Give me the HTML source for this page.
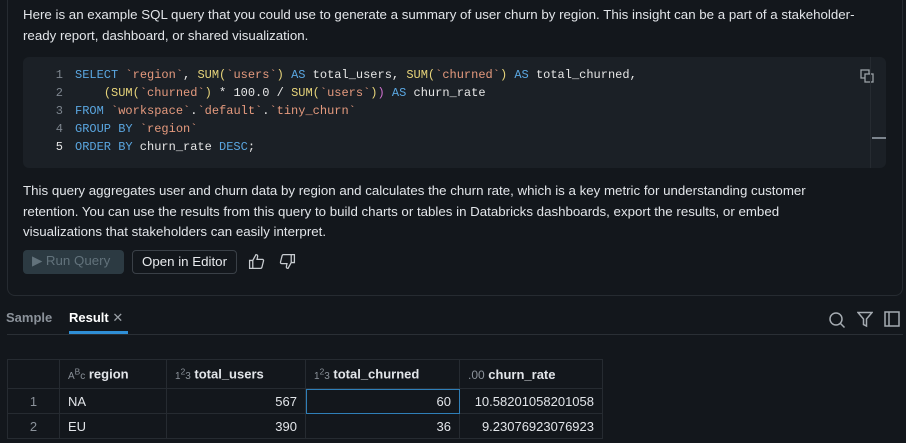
<!DOCTYPE html>
<html><head><style>
*{margin:0;padding:0;box-sizing:border-box}
body{width:906px;height:443px;background:#13171c;font-family:"Liberation Sans",sans-serif;color:#e2e5e9;overflow:hidden;position:relative}
.panel{position:absolute;left:7px;top:-10px;width:896px;height:306px;border:1px solid #262b31;border-top:none;border-radius:0 0 8px 8px}
.p{position:absolute;left:23px;font-size:13.3px;line-height:20.5px;width:850px}
.code{position:absolute;left:23px;top:57px;width:863px;height:111px;background:#1b2026;border-radius:6px;font-family:"Liberation Mono",monospace;font-size:12px;line-height:18.2px;padding-top:9px}
.ln{position:absolute;left:30px;color:#7d858e;width:10px;text-align:right}
.l{position:absolute;left:52px;white-space:pre;color:#e6e6e6}
.k{color:#5aa6e0}.s{color:#e59a7e}.f{color:#e6d37a}.pu{color:#d070d0}
.btn{position:absolute;top:250px;height:24px;border-radius:4px;font-size:13.3px;line-height:22px;padding:0 9px}
.tab{position:absolute;top:310px;font-size:13px;font-weight:bold}
table{position:absolute;left:7px;top:359px;border-collapse:collapse;font-size:13px;table-layout:fixed;width:595px}
td{border:1px solid #262b31;height:25px;padding:0 8px;color:#e2e5e9}
th{border:1px solid #262b31;height:29px;padding:0 8px;text-align:left;font-weight:bold;color:#e2e5e9}
.ic{color:#8b929a;font-weight:normal;font-size:10px}
</style></head><body>
<div class="panel"></div>
<div class="p" style="top:5px">Here is an example SQL query that you could use to generate a summary of user churn by region. This insight can be a part of a stakeholder-ready report, dashboard, or shared visualization.</div>
<div class="code">
<div class="ln" style="top:9px">1</div><div class="l" style="top:9px"><span class="k">SELECT</span> <span class="s">`region`</span>, <span class="f">SUM(</span><span class="s">`users`</span><span class="f">)</span> <span class="k">AS</span> total_users, <span class="f">SUM(</span><span class="s">`churned`</span><span class="f">)</span> <span class="k">AS</span> total_churned,</div>
<div class="ln" style="top:27px">2</div><div class="l" style="top:27px">    <span class="f">(SUM(</span><span class="s">`churned`</span><span class="f">)</span> * 100.0 / <span class="f">SUM(</span><span class="s">`users`</span><span class="f">)</span><span class="pu">)</span> <span class="k">AS</span> churn_rate</div>
<div class="ln" style="top:45px">3</div><div class="l" style="top:45px"><span class="k">FROM</span> <span class="s">`workspace`</span>.<span class="s">`default`</span>.<span class="s">`tiny_churn`</span></div>
<div class="ln" style="top:63px">4</div><div class="l" style="top:63px"><span class="k">GROUP BY</span> <span class="s">`region`</span></div>
<div class="ln" style="top:81px;color:#e6e6e6">5</div><div class="l" style="top:81px"><span class="k">ORDER BY</span> churn_rate <span class="k">DESC</span>;</div>
<svg style="position:absolute;left:837px;top:12px" width="14" height="14" viewBox="0 0 14 14" fill="none" stroke="#9aa0a6" stroke-width="1.3"><rect x="1" y="1" width="8" height="8"/><rect x="5" y="5" width="8" height="8" fill="#1b2026"/></svg>
<div style="position:absolute;left:847px;top:0;width:1px;height:111px;background:#262b31"></div>
<div style="position:absolute;left:849px;top:80px;width:14px;height:2px;background:#7d858e"></div>
</div>
<div class="p" style="top:181px;width:830px">This query aggregates user and churn data by region and calculates the churn rate, which is a key metric for understanding customer retention. You can use the results from this query to build charts or tables in Databricks dashboards, export the results, or embed visualizations that stakeholders can easily interpret.</div>
<div class="btn" style="left:23px;width:101px;background:#2c3a42;color:#62727b">&#9654; Run Query</div>
<div class="btn" style="left:132px;border:1px solid #3a4047;color:#e8eaed">Open in Editor</div>
<svg style="position:absolute;left:248px;top:253px" width="17" height="17" viewBox="0 0 16 16" fill="none" stroke="#c8ccd0" stroke-width="1.2"><path d="M1.5 7h3v7.5h-3zM4.5 7l3-5.5c1.2 0 1.8.8 1.5 2L8.5 6h5c.8 0 1.3.7 1.1 1.4l-1.5 6c-.2.7-.7 1.1-1.3 1.1H4.5"/></svg>
<svg style="position:absolute;left:279px;top:253px" width="17" height="17" viewBox="0 0 16 16" fill="none" stroke="#c8ccd0" stroke-width="1.2"><path d="M14.5 9h-3V1.5h3zM11.5 9l-3 5.5c-1.2 0-1.8-.8-1.5-2L7.5 10h-5c-.8 0-1.3-.7-1.1-1.4l1.5-6c.2-.7.7-1.1 1.3-1.1h7.3"/></svg>
<div class="tab" style="left:6px;color:#8b929a;font-weight:bold">Sample</div>
<div class="tab" style="left:69px;color:#fff">Result <span style="color:#9aa0a6;font-weight:normal">✕</span></div>
<div style="position:absolute;left:69px;top:331px;width:59px;height:3px;background:#2f8fd6"></div>
<div style="position:absolute;left:7px;top:334px;width:896px;height:1px;background:#2a2f35"></div>
<svg style="position:absolute;left:828px;top:311px" width="18" height="18" viewBox="0 0 18 18" fill="none" stroke="#a5abb1" stroke-width="1.5"><circle cx="8" cy="8" r="6"/><path d="M12.5 12.5l4 4"/></svg>
<svg style="position:absolute;left:857px;top:311px" width="16" height="17" viewBox="0 0 16 17" fill="none" stroke="#a5abb1" stroke-width="1.5"><path d="M1 1.5h14L9.5 8v7l-3-1.5V8z"/></svg>
<svg style="position:absolute;left:884px;top:311px" width="16" height="17" viewBox="0 0 16 17" fill="none" stroke="#a5abb1" stroke-width="1.5"><rect x="1" y="1" width="14" height="14"/><path d="M5 1v14"/></svg>
<table>
<colgroup><col style="width:52px"><col style="width:107px"><col style="width:139px"><col style="width:154px"><col style="width:143px"></colgroup>
<tr><th></th><th><span class="ic">A<sup>B</sup>c</span> region</th><th><span class="ic">1<sup>2</sup>3</span> total_users</th><th><span class="ic">1<sup>2</sup>3</span> total_churned</th><th><span class="ic" style="font-size:12px">.00</span> churn_rate</th></tr>
<tr><td style="text-align:center;color:#8b929a">1</td><td>NA</td><td style="text-align:right">567</td><td style="text-align:right;outline:1px solid #2f7fb8;outline-offset:-1px">60</td><td style="text-align:right">10.58201058201058</td></tr>
<tr><td style="text-align:center;color:#8b929a">2</td><td>EU</td><td style="text-align:right">390</td><td style="text-align:right">36</td><td style="text-align:right">9.23076923076923</td></tr>
</table>
</body></html>
